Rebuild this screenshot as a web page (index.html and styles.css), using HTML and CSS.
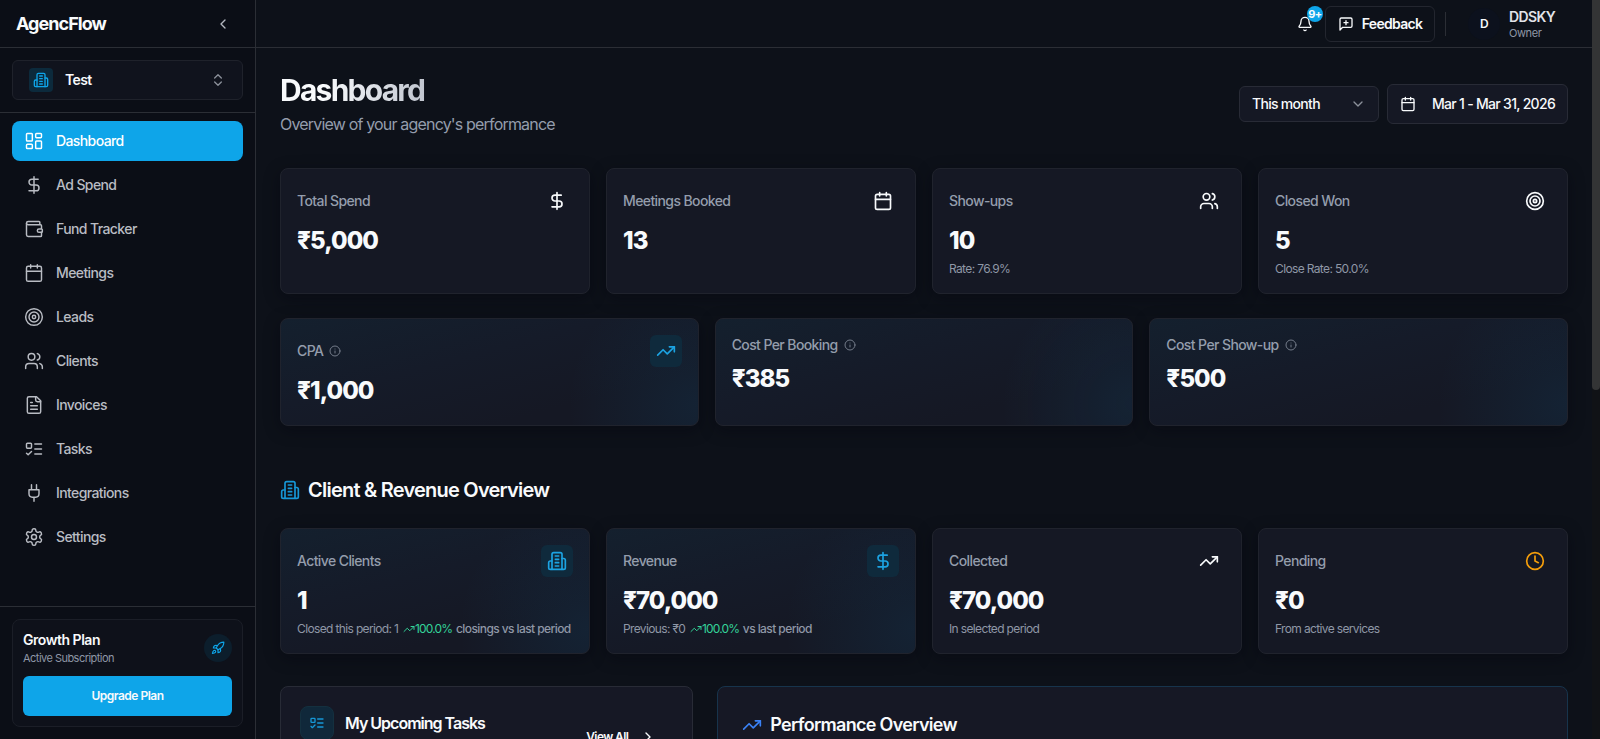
FILE: index.html
```html
<!DOCTYPE html>
<html lang="en">
<head>
<meta charset="utf-8">
<title>AgencFlow</title>
<link rel="stylesheet" href="styles.css">
</head>
<body>
<svg class="sprite" aria-hidden="true">
  <symbol id="building" viewBox="0 0 24 24"><path d="M6 22V4a2 2 0 0 1 2-2h8a2 2 0 0 1 2 2v18Z"/><path d="M6 12H4a2 2 0 0 0-2 2v6a2 2 0 0 0 2 2h2"/><path d="M18 9h2a2 2 0 0 1 2 2v9a2 2 0 0 1-2 2h-2"/><path d="M10 6h4M10 10h4M10 14h4M10 18h4"/></symbol>
  <symbol id="grid" viewBox="0 0 24 24"><rect width="7" height="9" x="3" y="3" rx="1"/><rect width="7" height="5" x="14" y="3" rx="1"/><rect width="7" height="9" x="14" y="12" rx="1"/><rect width="7" height="5" x="3" y="16" rx="1"/></symbol>
  <symbol id="dollar" viewBox="0 0 24 24"><path d="M12 2v20"/><path d="M17 5H9.500a3.500 3.500 0 0 0 0 7h5a3.500 3.500 0 0 1 0 7H6"/></symbol>
  <symbol id="wallet" viewBox="0 0 24 24"><path d="M19 7V4a1 1 0 0 0-1-1H5a2 2 0 0 0 0 4h15a1 1 0 0 1 1 1v4h-3a2 2 0 0 0 0 4h3a1 1 0 0 0 1-1v-2a1 1 0 0 0-1-1"/><path d="M3 5v14a2 2 0 0 0 2 2h15a1 1 0 0 0 1-1v-4"/></symbol>
  <symbol id="calendar" viewBox="0 0 24 24"><path d="M8 2v4M16 2v4"/><rect width="18" height="18" x="3" y="4" rx="2"/><path d="M3 10h18"/></symbol>
  <symbol id="target" viewBox="0 0 24 24"><circle cx="12" cy="12" r="10"/><circle cx="12" cy="12" r="6"/><circle cx="12" cy="12" r="2"/></symbol>
  <symbol id="users" viewBox="0 0 24 24"><path d="M16 21v-2a4 4 0 0 0-4-4H6a4 4 0 0 0-4 4v2"/><circle cx="9" cy="7" r="4"/><path d="M22 21v-2a4 4 0 0 0-3-3.870"/><path d="M16 3.130a4 4 0 0 1 0 7.750"/></symbol>
  <symbol id="file" viewBox="0 0 24 24"><path d="M15 2H6a2 2 0 0 0-2 2v16a2 2 0 0 0 2 2h12a2 2 0 0 0 2-2V7Z"/><path d="M14 2v4a2 2 0 0 0 2 2h4M10 9H8M16 13H8M16 17H8"/></symbol>
  <symbol id="tasks" viewBox="0 0 24 24"><rect x="3" y="5" width="6" height="6" rx="1"/><path d="m3 17 2 2 4-4M13 6h8M13 12h8M13 18h8"/></symbol>
  <symbol id="plug" viewBox="0 0 24 24"><path d="M12 22v-5M9 8V2M15 8V2M18 8v5a4 4 0 0 1-4 4h-4a4 4 0 0 1-4-4V8Z"/></symbol>
  <symbol id="gear" viewBox="0 0 24 24"><path d="M12.220 2h-.44a2 2 0 0 0-2 2v.18a2 2 0 0 1-1 1.730l-.43.25a2 2 0 0 1-2 0l-.15-.08a2 2 0 0 0-2.730.73l-.22.38a2 2 0 0 0 .73 2.730l.15.1a2 2 0 0 1 1 1.720v.51a2 2 0 0 1-1 1.740l-.15.09a2 2 0 0 0-.73 2.730l.22.38a2 2 0 0 0 2.730.73l.15-.08a2 2 0 0 1 2 0l.43.25a2 2 0 0 1 1 1.730V20a2 2 0 0 0 2 2h.44a2 2 0 0 0 2-2v-.18a2 2 0 0 1 1-1.730l.43-.25a2 2 0 0 1 2 0l.15.08a2 2 0 0 0 2.730-.73l.22-.39a2 2 0 0 0-.73-2.730l-.15-.08a2 2 0 0 1-1-1.740v-.5a2 2 0 0 1 1-1.740l.15-.09a2 2 0 0 0 .73-2.730l-.22-.38a2 2 0 0 0-2.730-.73l-.15.08a2 2 0 0 1-2 0l-.43-.25a2 2 0 0 1-1-1.730V4a2 2 0 0 0-2-2z"/><circle cx="12" cy="12" r="3"/></symbol>
  <symbol id="rocket" viewBox="0 0 24 24"><path d="M4.500 16.500c-1.500 1.260-2 5-2 5s3.740-.5 5-2c.71-.84.7-2.130-.09-2.910a2.180 2.180 0 0 0-2.910-.09z"/><path d="m12 15-3-3a22 22 0 0 1 2-3.950A12.880 12.880 0 0 1 22 2c0 2.720-.78 7.500-6 11a22.350 22.350 0 0 1-4 2z"/><path d="M9 12H4s.55-3.030 2-4c1.620-1.080 5 0 5 0M12 15v5s3.030-.55 4-2c1.080-1.620 0-5 0-5"/></symbol>
  <symbol id="trend" viewBox="0 0 24 24"><path d="m22 7-8.500 8.500-5-5L2 17"/><path d="M16 7h6v6"/></symbol>
  <symbol id="clock" viewBox="0 0 24 24"><circle cx="12" cy="12" r="10"/><path d="M12 6v6l4 2"/></symbol>
  <symbol id="info" viewBox="0 0 24 24"><circle cx="12" cy="12" r="10"/><path d="M12 16v-4M12 8h.01"/></symbol>
  <symbol id="bell" viewBox="0 0 24 24"><path d="M10.268 21a2 2 0 0 0 3.464 0"/><path d="M3.262 15.326A1 1 0 0 0 4 17h16a1 1 0 0 0 .74-1.673C19.410 13.956 18 12.499 18 8A6 6 0 0 0 6 8c0 4.499-1.411 5.956-2.738 7.326"/></symbol>
  <symbol id="message" viewBox="0 0 24 24"><path d="M21 15a2 2 0 0 1-2 2H7l-4 4V5a2 2 0 0 1 2-2h14a2 2 0 0 1 2 2zM12 7v6M9 10h6"/></symbol>
  <symbol id="left" viewBox="0 0 24 24"><path d="m15 18-6-6 6-6"/></symbol>
  <symbol id="right" viewBox="0 0 24 24"><path d="m9 18 6-6-6-6"/></symbol>
  <symbol id="down" viewBox="0 0 24 24"><path d="m6 9 6 6 6-6"/></symbol>
  <symbol id="updown" viewBox="0 0 24 24"><path d="m7 15 5 5 5-5M7 9l5-5 5 5"/></symbol>
</svg>
<div class="app">
  <aside class="sidebar">
    <div class="brand"><span class="brand-name">AgencFlow</span><svg class="icon i16 collapse"><use href="#left"/></svg></div>
    <div class="team">
      <div class="team-select"><span class="team-badge"><svg class="icon i16"><use href="#building"/></svg></span><span class="team-name">Test</span><svg class="icon i16 muted"><use href="#updown"/></svg></div>
    </div>
    <nav class="nav">
      <a class="nav-item active"><svg class="icon"><use href="#grid"/></svg>Dashboard</a>
      <a class="nav-item"><svg class="icon"><use href="#dollar"/></svg>Ad Spend</a>
      <a class="nav-item"><svg class="icon"><use href="#wallet"/></svg>Fund Tracker</a>
      <a class="nav-item"><svg class="icon"><use href="#calendar"/></svg>Meetings</a>
      <a class="nav-item"><svg class="icon"><use href="#target"/></svg>Leads</a>
      <a class="nav-item"><svg class="icon"><use href="#users"/></svg>Clients</a>
      <a class="nav-item"><svg class="icon"><use href="#file"/></svg>Invoices</a>
      <a class="nav-item"><svg class="icon"><use href="#tasks"/></svg>Tasks</a>
      <a class="nav-item"><svg class="icon"><use href="#plug"/></svg>Integrations</a>
      <a class="nav-item"><svg class="icon"><use href="#gear"/></svg>Settings</a>
    </nav>
    <div class="plan-wrap">
      <div class="plan">
        <div class="plan-top"><div><div class="plan-name">Growth Plan</div><div class="plan-sub">Active Subscription</div></div><span class="plan-icon"><svg class="icon i14"><use href="#rocket"/></svg></span></div>
        <div class="upgrade">Upgrade Plan</div>
      </div>
    </div>
  </aside>
  <div class="page">
    <header class="topbar">
      <div class="bell"><svg class="icon i16"><use href="#bell"/></svg><span class="count">9+</span></div>
      <div class="feedback"><svg class="icon i16"><use href="#message"/></svg>Feedback</div>
      <div class="divider"></div>
      <div class="avatar">D</div>
      <div class="user"><div class="user-name">DDSKY</div><div class="user-role">Owner</div></div>
    </header>
    <main class="main">
      <div class="heading">
        <div><h1 class="title">Dashboard</h1><p class="subtitle">Overview of your agency's performance</p></div>
        <div class="filters">
          <div class="select">This month<svg class="icon i16 muted"><use href="#down"/></svg></div>
          <div class="range"><svg class="icon i16"><use href="#calendar"/></svg>Mar 1 - Mar 31, 2026</div>
        </div>
      </div>
      <section class="cards four">
        <article class="card"><div class="card-top"><span class="label">Total Spend</span><span class="tile"><svg class="icon"><use href="#dollar"/></svg></span></div><div class="value">₹5,000</div></article>
        <article class="card"><div class="card-top"><span class="label">Meetings Booked</span><span class="tile"><svg class="icon"><use href="#calendar"/></svg></span></div><div class="value">13</div></article>
        <article class="card"><div class="card-top"><span class="label">Show-ups</span><span class="tile"><svg class="icon"><use href="#users"/></svg></span></div><div class="value">10</div><div class="note">Rate: 76.9%</div></article>
        <article class="card"><div class="card-top"><span class="label">Closed Won</span><span class="tile"><svg class="icon"><use href="#target"/></svg></span></div><div class="value">5</div><div class="note">Close Rate: 50.0%</div></article>
      </section>
      <section class="cards three">
        <article class="card glow"><div class="card-top"><span class="label">CPA<svg class="icon i12"><use href="#info"/></svg></span><span class="tile tinted"><svg class="icon"><use href="#trend"/></svg></span></div><div class="value">₹1,000</div></article>
        <article class="card glow"><div class="card-top bare"><span class="label">Cost Per Booking<svg class="icon i12"><use href="#info"/></svg></span></div><div class="value">₹385</div></article>
        <article class="card glow"><div class="card-top bare"><span class="label">Cost Per Show-up<svg class="icon i12"><use href="#info"/></svg></span></div><div class="value">₹500</div></article>
      </section>
      <h2 class="section-title"><svg class="icon"><use href="#building"/></svg>Client &amp; Revenue Overview</h2>
      <section class="cards four">
        <article class="card glow"><div class="card-top"><span class="label">Active Clients</span><span class="tile tinted"><svg class="icon"><use href="#building"/></svg></span></div><div class="value">1</div><div class="note">Closed this period: 1 <span class="up"><svg class="icon i12"><use href="#trend"/></svg>100.0%</span> <span class="versus">closings vs last period</span></div></article>
        <article class="card glow"><div class="card-top"><span class="label">Revenue</span><span class="tile tinted"><svg class="icon"><use href="#dollar"/></svg></span></div><div class="value">₹70,000</div><div class="note">Previous: ₹0 <span class="up"><svg class="icon i12"><use href="#trend"/></svg>100.0%</span> <span class="versus">vs last period</span></div></article>
        <article class="card"><div class="card-top"><span class="label">Collected</span><span class="tile"><svg class="icon"><use href="#trend"/></svg></span></div><div class="value">₹70,000</div><div class="note">In selected period</div></article>
        <article class="card"><div class="card-top"><span class="label">Pending</span><span class="tile amber"><svg class="icon"><use href="#clock"/></svg></span></div><div class="value">₹0</div><div class="note">From active services</div></article>
      </section>
      <section class="panels">
        <article class="panel tasks"><span class="panel-icon"><svg class="icon i16"><use href="#tasks"/></svg></span><h3 class="panel-title">My Upcoming Tasks</h3><span class="view-all">View All<svg class="icon i16"><use href="#right"/></svg></span></article>
        <article class="panel performance"><svg class="icon"><use href="#trend"/></svg><h3 class="panel-title large">Performance Overview</h3></article>
      </section>
    </main>
  </div>
  <div class="scrollbar"><div class="thumb"></div></div>
</div>
</body>
</html>
```
FILE: styles.css
```css
* { box-sizing: border-box; }
body {
  margin: 0;
  height: 739px;
  overflow: hidden;
  background: #0d1119;
  color: #f8fafc;
  font: 14px/20px Inter, "Liberation Sans", sans-serif;
  letter-spacing: -0.6px;
}
h1, h2, h3, p { margin: 0; }
.sprite { display: none; }
.icon {
  width: 20px;
  height: 20px;
  flex: none;
  display: block;
  fill: none;
  stroke: currentColor;
  stroke-width: 2;
  stroke-linecap: round;
  stroke-linejoin: round;
}
.i16 { width: 16px; height: 16px; }
.i14 { width: 14px; height: 14px; }
.i12 { width: 12px; height: 12px; }
.muted { color: #8b909a; }
.app { display: flex; height: 739px; overflow: hidden; }

.sidebar {
  width: 256px;
  flex: none;
  display: flex;
  flex-direction: column;
  background: #0b0e16;
  border-right: 1px solid #2b2e35;
}
.brand {
  height: 48px;
  flex: none;
  display: flex;
  align-items: center;
  justify-content: space-between;
  padding: 0 24px 0 16px;
  border-bottom: 1px solid #2b2e35;
}
.brand-name { font-size: 18px; font-weight: 700; letter-spacing: -0.95px; }
.collapse { color: #b4b8c0; }
.team { flex: none; padding: 12px; border-bottom: 1px solid #2b2e35; }
.team-select {
  height: 40px;
  display: flex;
  align-items: center;
  padding: 0 16px;
  border: 1px solid #1f222b;
  border-radius: 6px;
  background: #10131d;
  font-weight: 600;
}
.team-badge {
  width: 24px;
  height: 24px;
  display: grid;
  place-items: center;
  border-radius: 4px;
  background: #0c2a3c;
  color: #0ea5e9;
}
.team-name { flex: 1; margin-left: 12px; }
.nav { display: flex; flex-direction: column; gap: 4px; padding: 8px 12px; flex: 1; }
.nav-item {
  height: 40px;
  display: flex;
  align-items: center;
  gap: 12px;
  padding: 0 12px;
  border-radius: 8px;
  color: #b9bcc3;
  font-weight: 500;
}
.nav-item .icon { stroke-width: 1.75; }
.nav-item.active { background: #0ea5e9; color: #fff; }
.plan-wrap { flex: none; padding: 12px; border-top: 1px solid #2b2e35; }
.plan { height: 108px; padding: 10px; border: 1px solid #1b1e27; border-radius: 8px; background: #0e111a; }
.plan-top { display: flex; align-items: center; justify-content: space-between; }
.plan-name { font-weight: 600; line-height: 20px; letter-spacing: -0.47px; }
.plan-sub { font-size: 11px; line-height: 16px; color: #8f97a6; letter-spacing: -0.53px; }
.plan-icon { width: 28px; height: 28px; display: grid; place-items: center; border-radius: 50%; background: #0c1e2c; color: #0ea5e9; }
.upgrade {
  height: 40px;
  margin-top: 10px;
  display: grid;
  place-items: center;
  border-radius: 6px;
  background: #0ea5e9;
  font-size: 12px;
  font-weight: 600;
  letter-spacing: -0.5px;
}

.page { flex: 1; min-width: 0; }
.topbar {
  height: 48px;
  display: flex;
  align-items: center;
  justify-content: flex-end;
  padding-right: 38px;
  border-bottom: 1px solid #2b2e35;
}
.bell { position: relative; margin-right: 12px; }
.count {
  position: absolute;
  left: 10px;
  top: -10px;
  width: 16px;
  height: 16px;
  border-radius: 50%;
  background: #0ea5e9;
  font-size: 11px;
  line-height: 16px;
  font-weight: 700;
  text-align: center;
}
.feedback {
  width: 110px;
  height: 36px;
  display: flex;
  align-items: center;
  justify-content: center;
  gap: 8px;
  border: 1px solid #23262f;
  border-radius: 6px;
  font-weight: 600;
  letter-spacing: -0.7px;
}
.divider { width: 1px; height: 24px; margin: 0 22px 0 10px; background: #2b2e35; }
.avatar { width: 32px; height: 32px; display: grid; place-items: center; border-radius: 50%; background: #0c111d; font-size: 12px; font-weight: 600; }
.user { width: 45px; margin-left: 9px; white-space: nowrap; }
.user-name { font-weight: 600; line-height: 18px; color: #e2e4e9; }
.user-role { font-size: 11px; line-height: 14px; color: #8f97a6; letter-spacing: -0.4px; }

.main { padding: 24px 24px 0; }
.heading { height: 64px; display: flex; align-items: center; justify-content: space-between; }
.title {
  width: max-content;
  font-size: 30px;
  line-height: 36px;
  font-weight: 700;
  letter-spacing: -1.75px;
  padding-right: 2px;
  background: linear-gradient(90deg, #f8fafc 30%, #c0c5cf);
  -webkit-background-clip: text;
  background-clip: text;
  color: transparent;
}
.subtitle { margin-top: 4px; font-size: 16px; line-height: 24px; color: #949dac; letter-spacing: -0.82px; }
.filters { display: flex; align-items: center; gap: 8px; }
.select, .range { display: flex; align-items: center; justify-content: space-between; padding: 0 12px; border: 1px solid #282b36; border-radius: 6px; background: #151824; font-weight: 500; letter-spacing: -0.7px; }
.select { width: 140px; height: 36px; }
.range { width: 181px; height: 40px; }
.cards { display: grid; gap: 16px; }
.four { grid-template-columns: repeat(4, minmax(0, 1fr)); margin-top: 32px; }
.three { grid-template-columns: repeat(3, minmax(0, 1fr)); margin-top: 24px; }
.card {
  height: 126px;
  padding: 16px;
  border: 1px solid #20232d;
  border-radius: 8px;
  background: #151824;
  box-shadow: 0 4px 16px rgba(4, 6, 14, 0.4);
}
.three .card { height: 108px; }
.card.glow {
  background:
    radial-gradient(circle at 100% 80%, rgba(14, 120, 180, 0.11), transparent 130px),
    linear-gradient(165deg, #14202e 0%, #151b29 40%, #151824 75%);
}
.card-top { height: 32px; display: flex; align-items: center; justify-content: space-between; }
.card-top.bare { height: 20px; }
.label { display: flex; align-items: center; gap: 6px; color: #949dac; font-weight: 500; }
.label .icon { color: #747c8a; }
.tile { width: 32px; height: 32px; display: grid; place-items: center; border-radius: 6px; }
.tinted { background: #0f2a3c; color: #1ca3e2; }
.amber { color: #f59e0b; }
.value { margin-top: 8px; font-size: 24px; line-height: 32px; font-weight: 800; letter-spacing: -0.95px; }
.note { margin-top: 4px; font-size: 12px; line-height: 16px; color: #8f97a6; letter-spacing: -0.64px; white-space: nowrap; }
.up { margin-left: 2px; color: #34d399; letter-spacing: -0.85px; }
.up .icon { display: inline-block; vertical-align: -2px; }
.versus { margin-left: 1px; font-weight: 500; letter-spacing: -0.58px; }
.section-title { display: flex; align-items: center; gap: 8px; margin-top: 50px; font-size: 20px; line-height: 28px; font-weight: 600; letter-spacing: -0.77px; }
.section-title .icon { color: #1697d6; }
.section-title + .four { margin-top: 24px; }
.panels { display: grid; grid-template-columns: repeat(3, minmax(0, 1fr)); gap: 24px; margin-top: 32px; }
.panel { height: 420px; display: flex; align-items: flex-start; border: 1px solid #282b36; border-radius: 8px; background: #161825; }
.tasks { padding: 19px 36px 0 19px; }
.performance { grid-column: span 2; padding: 24px; border-color: #17344c; }
.panel-icon { width: 34px; height: 34px; display: grid; place-items: center; border-radius: 8px; border: 1px solid #14303f; background: #10283a; color: #1697d6; }
.panel-title { margin-left: 11px; font-size: 16px; line-height: 34px; font-weight: 600; letter-spacing: -1px; }
.panel-title.large { margin-left: 8px; font-size: 18px; line-height: 28px; letter-spacing: -0.7px; }
.performance .icon { margin-top: 4px; color: #3b82f6; }
.view-all { display: flex; align-items: center; gap: 12px; margin: 21px 0 0 auto; font-size: 12px; font-weight: 600; }
.scrollbar { width: 8px; flex: none; background: #101216; }
.thumb { height: 390px; border-radius: 0 0 4px 4px; background: #333435; }
```
